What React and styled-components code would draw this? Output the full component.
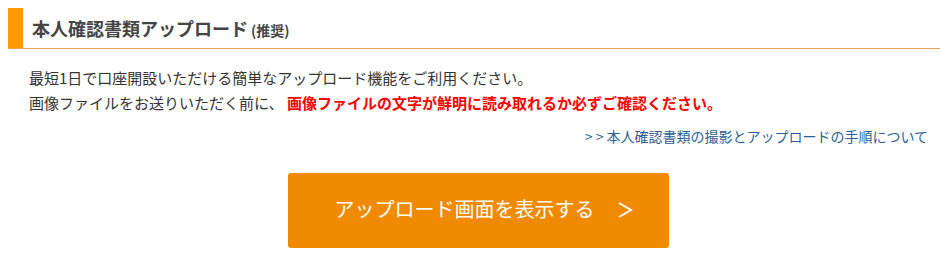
import React from 'react';
import styled, { createGlobalStyle } from 'styled-components';

const GlobalStyle = createGlobalStyle`
  html, body {
    margin: 0;
    padding: 0;
    background: #ffffff;
  }
  body {
    font-family: "Noto Sans CJK JP", "Noto Sans", sans-serif;
    color: #333333;
  }
`;

const Page = styled.div`
  padding: 8px 0 0 8px;
  width: 940px;
  box-sizing: border-box;
`;

const Header = styled.div`
  display: flex;
  align-items: center;
  height: 40px;
  border-bottom: 1px solid #eda24a;
`;

const Bar = styled.span`
  align-self: stretch;
  width: 15px;
  background-color: #ff9900;
`;

const Title = styled.h2`
  margin: 0 0 0 9px;
  font-size: 18px;
  font-weight: bold;
  color: #444444;
  line-height: 1;
  display: flex;
  align-items: baseline;
`;

const Sub = styled.small`
  font-size: 14px;
  margin-left: 3px;
`;

const Body = styled.div`
  padding: 16px 12px 0 21px;
`;

const Text = styled.p`
  margin: 0;
  font-size: 15px;
  line-height: 25px;
  color: #333333;
  white-space: nowrap;
`;

const Alert = styled.strong`
  color: #ff0000;
  font-weight: bold;
`;

const LinkRow = styled.div`
  margin-top: 10px;
  text-align: right;
  line-height: 20px;
`;

const GuideLink = styled.a`
  font-size: 14px;
  color: #2a5f95;
  text-decoration: none;
  cursor: pointer;
  &:hover {
    text-decoration: underline;
  }
`;

const Arrows = styled.span`
  letter-spacing: 3px;
`;

const ButtonRow = styled.div`
  margin-top: 27px;
  padding-left: 280px;
`;

const UploadButton = styled.button`
  display: flex;
  align-items: center;
  justify-content: center;
  gap: 22px;
  width: 381px;
  height: 75px;
  padding: 0 0 4px 10px;
  border: none;
  border-radius: 3px;
  background-color: #f08a00;
  color: #ffffff;
  font-family: "Noto Sans CJK JP", "Noto Sans", sans-serif;
  font-size: 20px;
  font-weight: 400;
  cursor: pointer;
  &:hover {
    background-color: #e07f00;
  }
`;

const Chevron = styled.svg`
  width: 16px;
  height: 18px;
  margin-top: 2px;
`;

export default function App() {
  return (
    <>
      <GlobalStyle />
      <Page>
        <Header>
          <Bar />
          <Title>
            本人確認書類アップロード<Sub>(推奨)</Sub>
          </Title>
        </Header>
        <Body>
          <Text>最短1日で口座開設いただける簡単なアップロード機能をご利用ください。</Text>
          <Text>
            画像ファイルをお送りいただく前に、 <Alert>画像ファイルの文字が鮮明に読み取れるか必ずご確認ください。</Alert>
          </Text>
          <LinkRow>
            <GuideLink><Arrows>&gt;&gt;</Arrows>本人確認書類の撮影とアップロードの手順について</GuideLink>
          </LinkRow>
        </Body>
        <ButtonRow>
          <UploadButton type="button">
            アップロード画面を表示する
            <Chevron viewBox="0 0 16 18">
              <path d="M2 2 L14 9 L2 16" fill="none" stroke="#ffffff" strokeWidth="2" />
            </Chevron>
          </UploadButton>
        </ButtonRow>
      </Page>
    </>
  );
}
